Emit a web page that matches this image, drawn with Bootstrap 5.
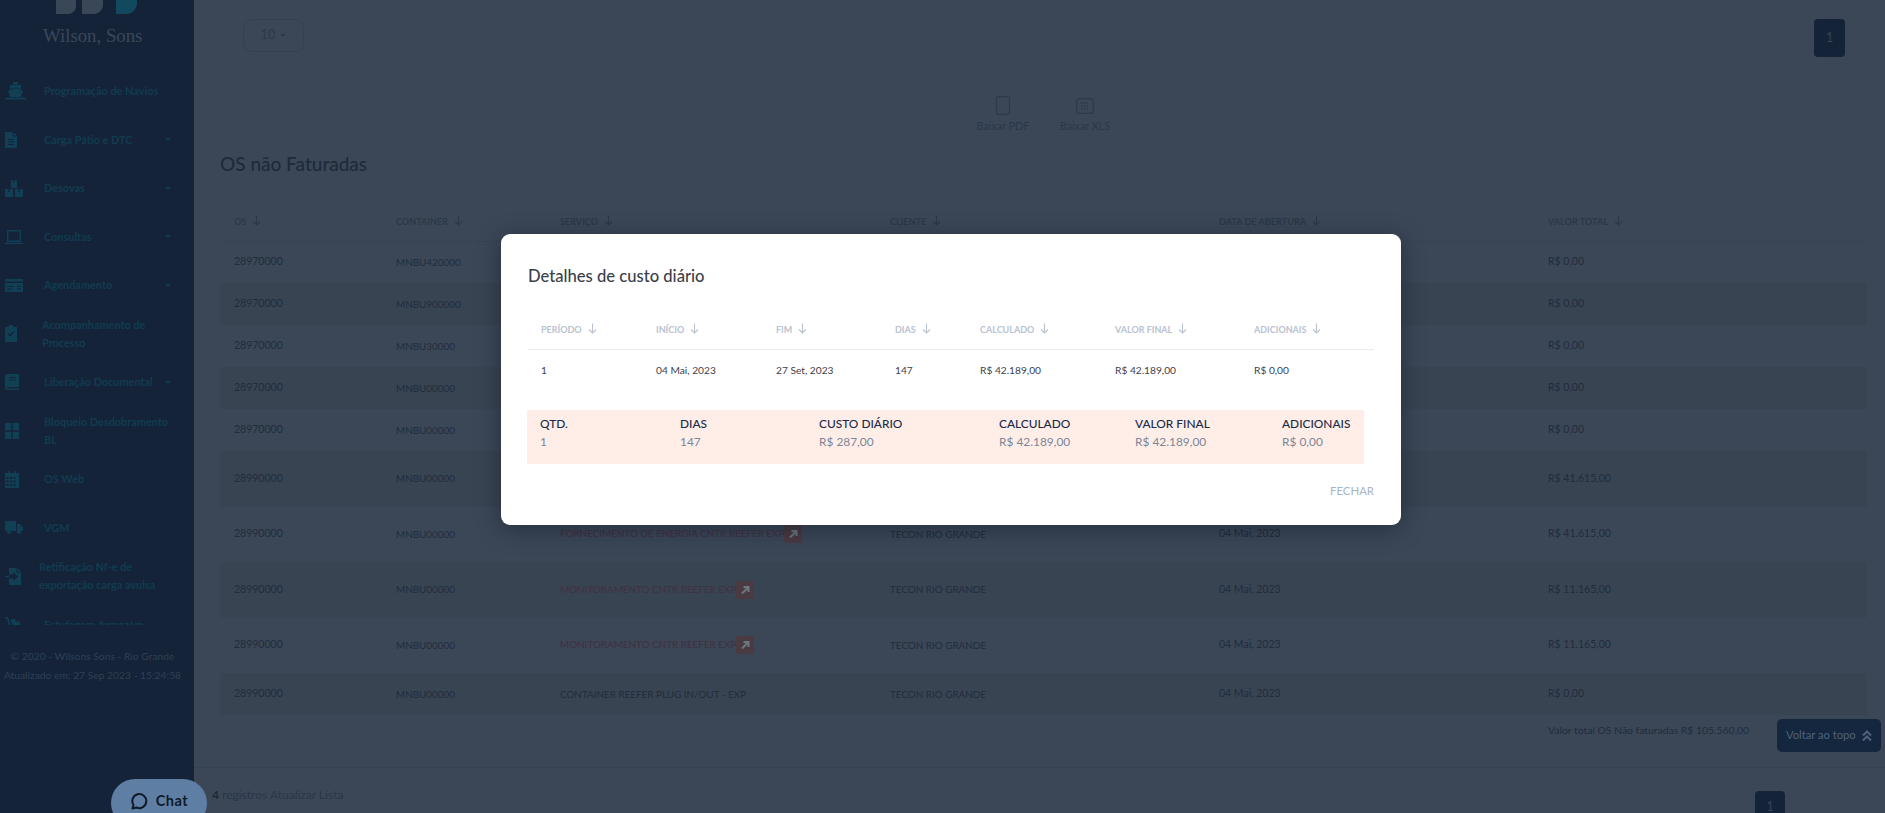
<!DOCTYPE html>
<html lang="pt-BR">
<head>
<meta charset="utf-8">
<title>OS não Faturadas</title>
<link href="https://cdn.jsdelivr.net/npm/bootstrap@5.3.0/dist/css/bootstrap.min.css" rel="stylesheet">
<style>
html,body{height:813px;overflow:hidden}
body{font-family:"Lato","Noto Sans",sans-serif;background:#3b4757;color:#1f2b3c}
.shell{height:813px;position:relative}
.side{width:194px;flex:0 0 194px;background:#142338;height:813px;overflow:hidden}
.logo{height:67px;position:relative}
.logo-shapes{display:block;position:absolute;left:56px;top:0}
.logo-word{position:absolute;left:43px;top:23px;font:18.8px/26px "Liberation Serif",serif;color:#3a4859;white-space:nowrap}
.side-list{height:558px;overflow:hidden}
.side-item{height:48.5px;padding-left:5px;color:#113c50;font-size:10.9px;font-weight:700;line-height:18px;white-space:nowrap}
.side-ico{width:39px;flex:0 0 39px;fill:#113f54}
.side-ico svg{display:block}
.side-item.in2 .side-ico{width:37px;flex-basis:37px}
.side-item.in3 .side-ico{width:34px;flex-basis:34px}
.side-txt{width:127px}
.nav-caret{width:0;height:0;border:3.5px solid transparent;border-top:3.5px solid #113c50;border-bottom:0}
.side-foot{font-size:10.3px;line-height:19px;color:#2f4056;padding:22px 9px 0 0;text-align:center;white-space:nowrap}
.main-col{min-width:0;height:813px}
.pad-x{padding-left:26px;padding-right:18px}
.top-bar{height:77px;padding:19px 40px 0 49px}
.size-btn{width:61px;height:33px;border:1px solid #354152;border-radius:9px;background:transparent;color:#2b3749;font-size:12.5px;padding:0}
.size-btn.dropdown-toggle::after{vertical-align:.2em;border-top-width:.25em;border-right-width:.25em;border-left-width:.25em;margin-left:5px;color:#2b3749}
.pg-cur{width:31px;height:38px;background:#142338;color:#34465b;border-radius:4px;font-size:12.5px}
.exports{height:65px;gap:32px;padding-left:9px;padding-top:20px;color:#2b3749;font-size:10.8px}
.exp-item{width:50px;line-height:15px}
.exp-item svg{display:block;margin-bottom:3px}
.page-title{font-size:19px;line-height:26px;font-weight:500;color:#1e2a3b;margin:10px 0 0;height:52px}
.os-table{--bs-table-bg:transparent;--bs-table-color:#202c3d;margin:0;table-layout:fixed;width:1647px;font-size:10.5px;color:#202c3d}
.os-table>thead>tr>th{height:38px;padding:0 14px;font-size:9.1px;font-weight:700;color:#2c3848;text-transform:uppercase;border-bottom:1px solid #374352;vertical-align:middle;white-space:nowrap;background:transparent}
.os-table>tbody>tr>td{padding:0 14px;vertical-align:middle;white-space:nowrap;background:transparent;color:#202c3d}
.os-table>tbody>tr:nth-child(even)>td{background:#394453}
.os-table>tbody>tr>td.caps{font-size:9.9px}
.os-table>tbody>tr>td.srv{color:#40303f;font-size:9.9px}
.r-a{height:42px}
.r-b{height:55.5px}
.sort{display:inline-block;margin-left:6px;vertical-align:-1px;stroke:currentColor;fill:none}
.ext{display:inline-flex;width:18px;height:18px;background:#4a3a42;border-radius:2px;align-items:center;justify-content:center;vertical-align:middle}
.ext svg{stroke:#6e7682;fill:none}
.total-row{height:52px;padding-left:1328px;padding-top:8px;font-size:10.4px;line-height:14px;color:#202c3d;white-space:nowrap}
.foot-bar{border-top:1px solid #354253;height:46px;padding:0 100px 0 18px;font-size:12px;color:#28344a}
.foot-bar b{color:#1c2839}
.reg{padding-top:18px;color:#2a3648}
.pg-bot{width:30px;height:38px;background:#142338;color:#34465b;font-size:12.5px;margin-top:23px;border-radius:4px 4px 0 0;padding-top:7px;text-align:center}
.to-top{position:absolute;left:1777px;top:719px;width:104px;height:33px;background:#15273f;color:#4e627b;border-radius:5px;font-size:11.2px;border:0;padding:0 0 0 9px;gap:6px}
.to-top svg{stroke:#4e627b;fill:none}
.chat{position:absolute;left:111px;top:779px;width:96px;height:48px;background:#5f7ea3;border-radius:24px;color:#0e1a2a;font-weight:700;font-size:14.5px;border:0;padding:0 0 4px;gap:8px;letter-spacing:.5px}
.chat svg{stroke:#0e1a2a;fill:none}
.dlg{position:absolute;left:501px;top:234px;width:900px;height:291px;border:0;border-radius:9px;box-shadow:0 4px 24px rgba(10,18,30,.45);padding:0 27px;background:#fff}
.dlg-title{font-size:16.6px;line-height:26px;font-weight:500;color:#3a3f49;margin:0;padding-top:29px;height:76px}
.dt-table{--bs-table-bg:transparent;margin:0;table-layout:fixed;width:846px;font-size:10.2px}
.dt-table>thead>tr>th{height:39px;padding:0 13px;font-size:9px;font-weight:700;color:#b9c2d1;text-transform:uppercase;border-bottom:1px solid #e9ecf1;vertical-align:middle;white-space:nowrap}
.dt-table>tbody>tr>td{height:41px;padding:2px 13px 0;color:#3c414c;vertical-align:middle;white-space:nowrap}
.dt-summary{display:grid;grid-template-columns:140px 139px 180px 136px 147px 1fr;width:837px;height:53.5px;background:#ffeee7;margin:20px 0 0 -1px;padding:5px 0 0 13px;font-size:11.9px;line-height:18px}
.dt-lab{color:#1a2a4a;font-weight:500;white-space:nowrap}
.dt-val{color:#7b8698;white-space:nowrap}
.dt-foot{padding-top:15px;text-align:right;line-height:20px}
.dt-close{background:none;border:0;padding:0;font-size:11.4px;color:#a9b4c8}
</style>
</head>
<body>
<svg width="0" height="0" class="position-absolute">
<symbol id="arr" viewBox="0 0 9 11"><path d="M4.500 .5v9.500M1 6.500l3.500 3.500L8 6.500" stroke-width="1.100" fill="none"/></symbol>
<symbol id="ne" viewBox="0 0 10 10"><path d="M2 8.500L8 2.500M3.500 2h5v5" stroke-width="2" fill="none"/></symbol>
</svg>
<div class="shell d-flex">
  <aside class="side d-flex flex-column">
    <div class="logo">
      <svg class="logo-shapes" width="82" height="15" viewBox="0 0 82 15"><path d="M0 0h20v6a8 8 0 0 1-8 8H0zM26 0h21v5a9 9 0 0 1-9 9H26z" fill="#3a4757"/><path d="M60 0h21v3a11 11 0 0 1-11 11H60z" fill="#114a5e"/></svg>
      <div class="logo-word">Wilson, Sons</div>
    </div>
    <nav class="side-list">
      <div class="side-item d-flex align-items-center"><span class="side-ico"><svg width="21" height="18" viewBox="0 0 21 18"><path d="M8 0h5v2.500h-5zM5 3h11v4.500L10.500 5.500 5 7.500zM3 9l7.500-3L18 9l-2 6H5zM0 16c2 0 3-.5 3.500-1 1.500 1.300 3 1.300 4.500 0 1.500 1.300 3.500 1.300 5 0 1.500 1.300 3 1.300 4.500 0 .5.500 1.500 1 3.500 1v1.500H0z"/></svg></span><span class="side-txt">Programação de Navios</span></div>
      <div class="side-item d-flex align-items-center"><span class="side-ico"><svg width="12" height="16" viewBox="0 0 12 16"><path d="M0 0h7.500v4.500H12V16H0zM8.500 0L12 3.500H8.500zM3 7v1h6V7zM3 9.500v1h6v-1zM3 12v1h6v-1z" fill-rule="evenodd"/></svg></span><span class="side-txt d-flex justify-content-between align-items-center">Carga Pátio e DTC<i class="nav-caret"></i></span></div>
      <div class="side-item d-flex align-items-center"><span class="side-ico"><svg width="18" height="17" viewBox="0 0 18 17"><path d="M6 0h2.300v3h1.400V0H12v8H6zM0 9h3.300v3h1.400V9H8v8H0zM10 9h3.300v3h1.400V9H18v8h-8z"/></svg></span><span class="side-txt d-flex justify-content-between align-items-center">Desovas<i class="nav-caret"></i></span></div>
      <div class="side-item d-flex align-items-center"><span class="side-ico"><svg width="18" height="14" viewBox="0 0 18 14"><path d="M2 0h14v12H2zM3.500 1.500v9h11v-9zM0 12.800h18V14H0z" fill-rule="evenodd"/></svg></span><span class="side-txt d-flex justify-content-between align-items-center">Consultas<i class="nav-caret"></i></span></div>
      <div class="side-item d-flex align-items-center"><span class="side-ico"><svg width="18" height="13" viewBox="0 0 18 13"><path d="M0 0h18v2.500H0zM0 4h18v9H0zM2 7v1h7V7zM2 9.500v1h5v-1zM12 7v1h4V7zM12 9.500v1h4v-1z" fill-rule="evenodd"/></svg></span><span class="side-txt d-flex justify-content-between align-items-center">Agendamento<i class="nav-caret"></i></span></div>
      <div class="side-item in2 d-flex align-items-center"><span class="side-ico"><svg width="12" height="17" viewBox="0 0 12 17"><path d="M4 0h4v2h4v15H0V2h4zM9.500 7L8.500 6 5 9.500 3.500 8l-1 1L5 11.500z" fill-rule="evenodd"/></svg></span><span class="side-txt">Acompanhamento de<br>Processo</span></div>
      <div class="side-item d-flex align-items-center"><span class="side-ico"><svg width="14" height="16" viewBox="0 0 14 16"><path d="M2 0h12v13H2a1 1 0 0 0 0 1.500h12V16H2a2 2 0 0 1-2-2V2a2 2 0 0 1 2-2zM4 3v1h7V3zM4 5.500v1h7v-1z" fill-rule="evenodd"/></svg></span><span class="side-txt d-flex justify-content-between align-items-center">Liberação Documental<i class="nav-caret"></i></span></div>
      <div class="side-item d-flex align-items-center"><span class="side-ico"><svg width="14" height="16" viewBox="0 0 14 16"><path d="M0 0h6.300v7.300H0zM7.700 0H14v7.300H7.700zM0 8.700h6.300V16H0zM7.700 8.700H14V16H7.700z"/></svg></span><span class="side-txt">Bloqueio Desdobramento<br>BL</span></div>
      <div class="side-item d-flex align-items-center"><span class="side-ico"><svg width="14" height="17" viewBox="0 0 14 17"><path d="M3 0h1.500v2h5V0H11v2h3v15H0V2h3zM1.500 6v2h2V6zM5 6v2h2V6zM8.500 6v2h2V6zM1.500 9.500v2h2v-2zM5 9.500v2h2v-2zM8.500 9.500v2h2v-2zM1.500 13v2h2v-2zM5 13v2h2v-2zM8.500 13v2h2v-2z" fill-rule="evenodd"/></svg></span><span class="side-txt">OS Web</span></div>
      <div class="side-item d-flex align-items-center"><span class="side-ico"><svg width="18" height="13" viewBox="0 0 18 13"><path d="M0 0h11v10H0zM12 3h3l3 3.500V10h-6z"/><circle cx="4" cy="11" r="2"/><circle cx="14" cy="11" r="2"/></svg></span><span class="side-txt">VGM</span></div>
      <div class="side-item in3 d-flex align-items-center"><span class="side-ico"><svg width="16" height="17" viewBox="0 0 16 17"><path d="M4 0h7.500v4.500H16V17H4v-6.500h4.500V13L13 8.500 8.500 4v2.500H4zM12.500 0L16 3.500h-3.500zM0 7.700h4V9.300H0z"/></svg></span><span class="side-txt">Retificação Nf-e de<br>exportação carga avulsa</span></div>
      <div class="side-item d-flex align-items-center"><span class="side-ico"><svg width="18" height="16" viewBox="0 0 18 16"><path d="M0 0h3l3 10 2-1-2.500-6 4-1.500L11 5l3-1 1.500 4L7 12l-.5 2-1.500 0L2 1.500H0z"/></svg></span><span class="side-txt">Estufagem Armazém</span></div>
    </nav>
    <div class="side-foot">
      <div>© 2020 - Wilsons Sons - Rio Grande</div>
      <div>Atualizado em: 27 Sep 2023 - 15:24:58</div>
    </div>
  </aside>
  <main class="main-col flex-grow-1 d-flex flex-column">
    <div class="top-bar d-flex justify-content-between align-items-start">
      <button class="btn size-btn dropdown-toggle" type="button">10</button>
      <div class="pg-cur d-flex align-items-center justify-content-center">1</div>
    </div>
    <div class="exports d-flex justify-content-center align-items-start text-center">
      <div class="exp-item d-flex flex-column align-items-center text-nowrap">
        <svg width="16" height="19" viewBox="0 0 16 19"><rect x="1.500" y=".7" width="13" height="17.600" rx="2" fill="none" stroke="#2d3a4c" stroke-width="1.200"/><path d="M7 .7h2v1.300H7z" fill="#2d3a4c"/></svg>
        <span>Baixar PDF</span>
      </div>
      <div class="exp-item d-flex flex-column align-items-center text-nowrap">
        <svg width="18" height="19" viewBox="0 0 18 19"><rect x=".7" y="2.700" width="16.600" height="14.600" rx="2.500" fill="none" stroke="#2d3a4c" stroke-width="1.200"/><path d="M5 7h8M5 10h8M5 13h8" stroke="#2d3a4c" stroke-width="1.400" stroke-dasharray="1.400 1.400" fill="none"/></svg>
        <span>Baixar XLS</span>
      </div>
    </div>
    <div class="pad-x">
      <h2 class="page-title">OS não Faturadas</h2>
      <table class="table table-borderless os-table">
        <colgroup><col width="162"><col width="164"><col width="330"><col width="329"><col width="329"><col width="333"></colgroup>
        <thead><tr>
          <th>OS<svg class="sort" width="9" height="11"><use href="#arr"/></svg></th>
          <th>Container<svg class="sort" width="9" height="11"><use href="#arr"/></svg></th>
          <th>Serviço<svg class="sort" width="9" height="11"><use href="#arr"/></svg></th>
          <th>Cliente<svg class="sort" width="9" height="11"><use href="#arr"/></svg></th>
          <th>Data de abertura<svg class="sort" width="9" height="11"><use href="#arr"/></svg></th>
          <th>Valor total<svg class="sort" width="9" height="11"><use href="#arr"/></svg></th>
        </tr></thead>
        <tbody>
          <tr class="r-a"><td>28970000</td><td class="caps">MNBU420000</td><td class="caps">ARMAZENAGEM</td><td class="caps">TECON RIO GRANDE</td><td>04 Mai, 2023</td><td>R$ 0,00</td></tr>
          <tr class="r-a"><td>28970000</td><td class="caps">MNBU900000</td><td class="caps">ARMAZENAGEM</td><td class="caps">TECON RIO GRANDE</td><td>04 Mai, 2023</td><td>R$ 0,00</td></tr>
          <tr class="r-a"><td>28970000</td><td class="caps">MNBU30000</td><td class="caps">ARMAZENAGEM</td><td class="caps">TECON RIO GRANDE</td><td>04 Mai, 2023</td><td>R$ 0,00</td></tr>
          <tr class="r-a"><td>28970000</td><td class="caps">MNBU00000</td><td class="caps">ARMAZENAGEM</td><td class="caps">TECON RIO GRANDE</td><td>04 Mai, 2023</td><td>R$ 0,00</td></tr>
          <tr class="r-a"><td>28970000</td><td class="caps">MNBU00000</td><td class="caps">ARMAZENAGEM</td><td class="caps">TECON RIO GRANDE</td><td>04 Mai, 2023</td><td>R$ 0,00</td></tr>
          <tr class="r-b"><td>28990000</td><td class="caps">MNBU00000</td><td class="srv">FORNECIMENTO DE ENERGIA CNTR REEFER EXP<span class="ext"><svg width="10" height="10"><use href="#ne"/></svg></span></td><td class="caps">TECON RIO GRANDE</td><td>04 Mai, 2023</td><td>R$ 41.615,00</td></tr>
          <tr class="r-b"><td>28990000</td><td class="caps">MNBU00000</td><td class="srv">FORNECIMENTO DE ENERGIA CNTR REEFER EXP<span class="ext"><svg width="10" height="10"><use href="#ne"/></svg></span></td><td class="caps">TECON RIO GRANDE</td><td>04 Mai, 2023</td><td>R$ 41.615,00</td></tr>
          <tr class="r-b"><td>28990000</td><td class="caps">MNBU00000</td><td class="srv">MONITORAMENTO CNTR REEFER EXP<span class="ext"><svg width="10" height="10"><use href="#ne"/></svg></span></td><td class="caps">TECON RIO GRANDE</td><td>04 Mai, 2023</td><td>R$ 11.165,00</td></tr>
          <tr class="r-b"><td>28990000</td><td class="caps">MNBU00000</td><td class="srv">MONITORAMENTO CNTR REEFER EXP<span class="ext"><svg width="10" height="10"><use href="#ne"/></svg></span></td><td class="caps">TECON RIO GRANDE</td><td>04 Mai, 2023</td><td>R$ 11.165,00</td></tr>
          <tr class="r-a"><td>28990000</td><td class="caps">MNBU00000</td><td class="caps">CONTAINER REEFER PLUG IN/OUT - EXP</td><td class="caps">TECON RIO GRANDE</td><td>04 Mai, 2023</td><td>R$ 0,00</td></tr>
        </tbody>
      </table>
      <div class="total-row">Valor total OS Não faturadas R$ 105.560,00</div>
    </div>
    <div class="foot-bar d-flex justify-content-between">
      <div class="reg"><b>4</b> registros Atualizar Lista</div>
      <div class="pg-bot">1</div>
    </div>
  </main>
  <button class="to-top btn d-flex align-items-center" type="button">Voltar ao topo<svg width="10" height="12" viewBox="0 0 10 12"><path d="M1 5.500l4-4 4 4M1 10.500l4-4 4 4" stroke-width="2"/></svg></button>
  <button class="chat btn d-flex align-items-center justify-content-center" type="button"><svg width="18" height="18" viewBox="0 0 18 18"><path d="M2.500 16.500l1-3.500a7 7 0 1 1 3 2.500z" stroke-width="2" stroke-linejoin="round"/></svg>Chat</button>
  <div class="dlg modal-content" role="dialog">
    <h5 class="dlg-title">Detalhes de custo diário</h5>
    <table class="table table-borderless dt-table">
      <colgroup><col width="115"><col width="120"><col width="119"><col width="85"><col width="135"><col width="139"><col width="133"></colgroup>
      <thead><tr>
        <th>Período<svg class="sort" width="9" height="11"><use href="#arr"/></svg></th>
        <th>Início<svg class="sort" width="9" height="11"><use href="#arr"/></svg></th>
        <th>Fim<svg class="sort" width="9" height="11"><use href="#arr"/></svg></th>
        <th>Dias<svg class="sort" width="9" height="11"><use href="#arr"/></svg></th>
        <th>Calculado<svg class="sort" width="9" height="11"><use href="#arr"/></svg></th>
        <th>Valor final<svg class="sort" width="9" height="11"><use href="#arr"/></svg></th>
        <th>Adicionais<svg class="sort" width="9" height="11"><use href="#arr"/></svg></th>
      </tr></thead>
      <tbody><tr><td>1</td><td>04 Mai, 2023</td><td>27 Set, 2023</td><td>147</td><td>R$ 42.189,00</td><td>R$ 42.189,00</td><td>R$ 0,00</td></tr></tbody>
    </table>
    <div class="dt-summary">
      <div><div class="dt-lab">QTD.</div><div class="dt-val">1</div></div>
      <div><div class="dt-lab">DIAS</div><div class="dt-val">147</div></div>
      <div><div class="dt-lab">CUSTO DIÁRIO</div><div class="dt-val">R$ 287,00</div></div>
      <div><div class="dt-lab">CALCULADO</div><div class="dt-val">R$ 42.189,00</div></div>
      <div><div class="dt-lab">VALOR FINAL</div><div class="dt-val">R$ 42.189,00</div></div>
      <div><div class="dt-lab">ADICIONAIS</div><div class="dt-val">R$ 0,00</div></div>
    </div>
    <div class="dt-foot"><button class="dt-close" type="button">FECHAR</button></div>
  </div>
</div>
<script src="https://cdn.jsdelivr.net/npm/bootstrap@5.3.0/dist/js/bootstrap.bundle.min.js"></script>
</body>
</html>
